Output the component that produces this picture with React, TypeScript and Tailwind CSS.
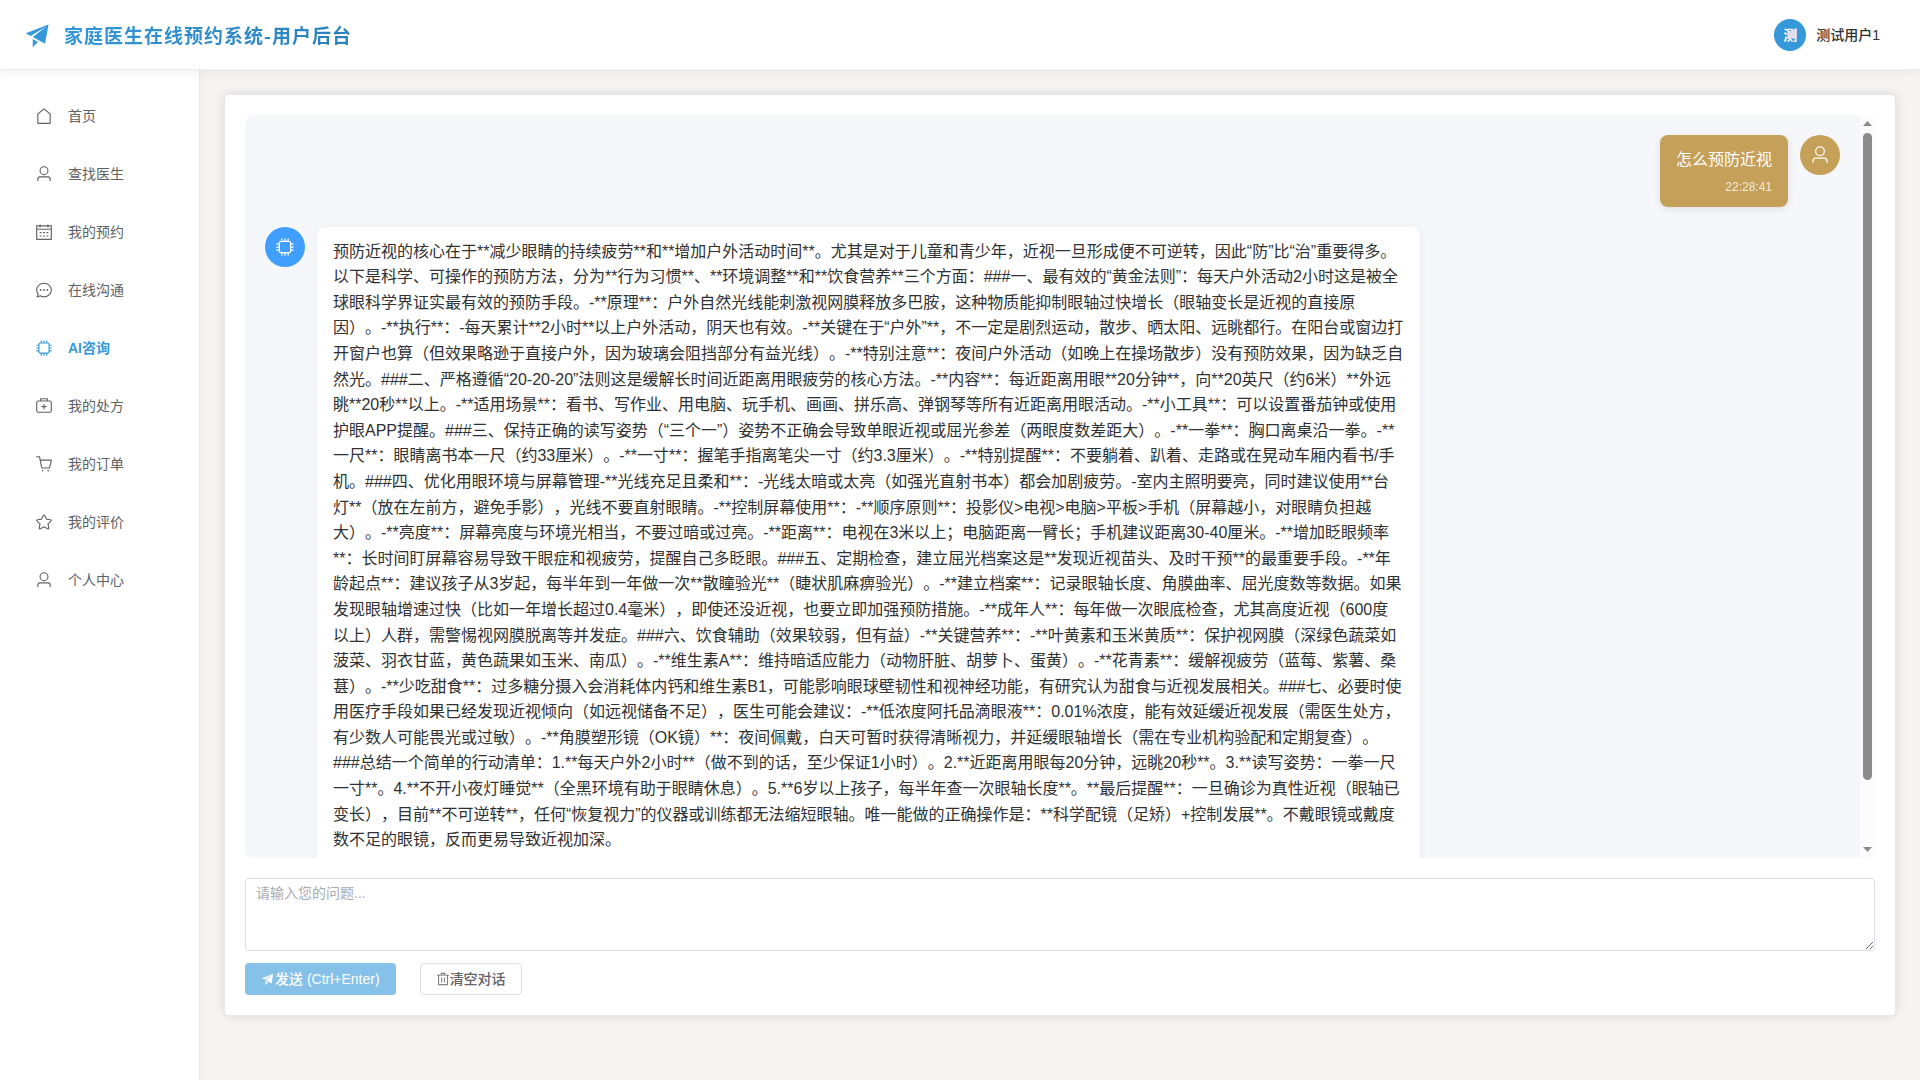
import { useState } from "react"
import clsx from "clsx"

// Icon outlines, all on a 1024 grid
const ICONS = {
  promotion: "m64 448 832-320-128 704-446.08-243.328L832 192 242.816 545.536zm256 512V657.024L512 768z",
  house:
    "M192 413.952V896h640V413.952L512 147.328zM139.52 374.4l352-293.312a32 32 0 0 1 40.96 0l352 293.312A32 32 0 0 1 896 398.976V928a32 32 0 0 1-32 32H160a32 32 0 0 1-32-32V398.976a32 32 0 0 1 11.52-24.576",
  user: "M512 512a192 192 0 1 0 0-384 192 192 0 0 0 0 384m0 64a256 256 0 1 1 0-512 256 256 0 0 1 0 512m320 320v-96a96 96 0 0 0-96-96H288a96 96 0 0 0-96 96v96a32 32 0 1 1-64 0v-96a160 160 0 0 1 160-160h448a160 160 0 0 1 160 160v96a32 32 0 1 1-64 0",
  calendar:
    "M128 384v512h768V192H768v32a32 32 0 1 1-64 0v-32H320v32a32 32 0 0 1-64 0v-32H128v128h768v64zm192-256h384V96a32 32 0 1 1 64 0v32h160a32 32 0 0 1 32 32v768a32 32 0 0 1-32 32H96a32 32 0 0 1-32-32V160a32 32 0 0 1 32-32h160V96a32 32 0 0 1 64 0zm-32 384h64a32 32 0 0 1 0 64h-64a32 32 0 0 1 0-64m0 192h64a32 32 0 1 1 0 64h-64a32 32 0 1 1 0-64m192-192h64a32 32 0 0 1 0 64h-64a32 32 0 0 1 0-64m0 192h64a32 32 0 1 1 0 64h-64a32 32 0 1 1 0-64m192-192h64a32 32 0 1 1 0 64h-64a32 32 0 1 1 0-64m0 192h64a32 32 0 1 1 0 64h-64a32 32 0 1 1 0-64",
  chat: "m174.72 855.68 135.296-45.12 23.68 11.84C388.096 849.536 448.576 864 512 864c211.84 0 384-166.784 384-352S723.84 160 512 160 128 326.784 128 512c0 69.12 24.96 139.264 70.848 199.232l22.08 28.8-46.272 115.584zm-45.248 82.56A32 32 0 0 1 89.6 896l58.368-145.92C94.72 680.32 64 596.864 64 512 64 299.904 256 96 512 96s448 203.904 448 416-192 416-448 416a461.06 461.06 0 0 1-206.912-48.384zM512 563.2a51.2 51.2 0 1 1 0-102.4 51.2 51.2 0 0 1 0 102.4m192 0a51.2 51.2 0 1 1 0-102.4 51.2 51.2 0 0 1 0 102.4m-384 0a51.2 51.2 0 1 1 0-102.4 51.2 51.2 0 0 1 0 102.4",
  cpu: "M320 256a64 64 0 0 0-64 64v384a64 64 0 0 0 64 64h384a64 64 0 0 0 64-64V320a64 64 0 0 0-64-64zm0-64h384a128 128 0 0 1 128 128v384a128 128 0 0 1-128 128H320a128 128 0 0 1-128-128V320a128 128 0 0 1 128-128M512 64a32 32 0 0 1 32 32v128h-64V96a32 32 0 0 1 32-32m160 0a32 32 0 0 1 32 32v128h-64V96a32 32 0 0 1 32-32m-320 0a32 32 0 0 1 32 32v128h-64V96a32 32 0 0 1 32-32m160 896a32 32 0 0 1-32-32V800h64v128a32 32 0 0 1-32 32m160 0a32 32 0 0 1-32-32V800h64v128a32 32 0 0 1-32 32m-320 0a32 32 0 0 1-32-32V800h64v128a32 32 0 0 1-32 32M64 512a32 32 0 0 1 32-32h128v64H96a32 32 0 0 1-32-32m0-160a32 32 0 0 1 32-32h128v64H96a32 32 0 0 1-32-32m0 320a32 32 0 0 1 32-32h128v64H96a32 32 0 0 1-32-32m896-160a32 32 0 0 1-32 32H800v-64h128a32 32 0 0 1 32 32m0-160a32 32 0 0 1-32 32H800v-64h128a32 32 0 0 1 32 32m0 320a32 32 0 0 1-32 32H800v-64h128a32 32 0 0 1 32 32",
  kit: "M192 256a64 64 0 0 0-64 64v448a64 64 0 0 0 64 64h640a64 64 0 0 0 64-64V320a64 64 0 0 0-64-64zm0-64h640a128 128 0 0 1 128 128v448a128 128 0 0 1-128 128H192A128 128 0 0 1 64 768V320a128 128 0 0 1 128-128M544 512h96a32 32 0 0 1 0 64h-96v96a32 32 0 0 1-64 0v-96h-96a32 32 0 0 1 0-64h96v-96a32 32 0 0 1 64 0zM352 128v64h320v-64zm-32-64h384a32 32 0 0 1 32 32v128a32 32 0 0 1-32 32H320a32 32 0 0 1-32-32V96a32 32 0 0 1 32-32",
  cart: "M432 928a48 48 0 1 1 0-96 48 48 0 0 1 0 96m320 0a48 48 0 1 1 0-96 48 48 0 0 1 0 96M96 128a32 32 0 0 1 0-64h160a32 32 0 0 1 31.36 25.728L320.64 256H928a32 32 0 0 1 31.296 38.72l-96 448A32 32 0 0 1 832 768H384a32 32 0 0 1-31.36-25.728L229.76 128zm314.24 576h395.904l82.304-384H333.44z",
  star: "m512 747.84 228.16 119.936a6.4 6.4 0 0 0 9.28-6.72l-43.52-254.08 184.512-179.904a6.4 6.4 0 0 0-3.52-10.88l-255.104-37.12L517.76 147.904a6.4 6.4 0 0 0-11.52 0L392.192 379.072l-255.104 37.12a6.4 6.4 0 0 0-3.52 10.88L318.08 606.976l-43.584 254.08a6.4 6.4 0 0 0 9.28 6.72zM313.6 924.48a70.4 70.4 0 0 1-102.144-74.24l37.888-220.928L88.96 472.96A70.4 70.4 0 0 1 128 352.896l221.76-32.256 99.2-200.96a70.4 70.4 0 0 1 126.208 0l99.2 200.96 221.824 32.256a70.4 70.4 0 0 1 39.04 120.064L774.72 629.376l37.888 220.928a70.4 70.4 0 0 1-102.144 74.24L512 820.096l-198.4 104.32z",
  trash:
    "M160 256H96a32 32 0 0 1 0-64h256V95.936a32 32 0 0 1 32-32h256a32 32 0 0 1 32 32V192h256a32 32 0 1 1 0 64h-64v672a32 32 0 0 1-32 32H192a32 32 0 0 1-32-32zm448-64v-64H416v64zM224 896h576V256H224zm192-128a32 32 0 0 1-32-32V416a32 32 0 0 1 64 0v320a32 32 0 0 1-32 32m192 0a32 32 0 0 1-32-32V416a32 32 0 0 1 64 0v320a32 32 0 0 1-32 32",
}

type IconName = keyof typeof ICONS

function Icon({ name, className }: { name: IconName; className?: string }) {
  return (
    <svg viewBox="0 0 1024 1024" fill="currentColor" aria-hidden="true" className={clsx("shrink-0", className)}>
      <path d={ICONS[name]} />
    </svg>
  )
}

const menu: { label: string; icon: IconName; active?: boolean }[] = [
  { label: "首页", icon: "house" },
  { label: "查找医生", icon: "user" },
  { label: "我的预约", icon: "calendar" },
  { label: "在线沟通", icon: "chat" },
  { label: "AI咨询", icon: "cpu", active: true },
  { label: "我的处方", icon: "kit" },
  { label: "我的订单", icon: "cart" },
  { label: "我的评价", icon: "star" },
  { label: "个人中心", icon: "user" },
]

const answer = [
  "预防近视的核心在于**减少眼睛的持续疲劳**和**增加户外活动时间**。尤其是对于儿童和青少年，近视一旦形成便不可逆转，因此“防”比“治”重要得多。以下是科学、可操作的预防方法，分为**行为习惯**、**环境调整**和**饮食营养**三个方面：",
  "###一、最有效的“黄金法则”：每天户外活动2小时这是被全球眼科学界证实最有效的预防手段。-**原理**：户外自然光线能刺激视网膜释放多巴胺，这种物质能抑制眼轴过快增长（眼轴变长是近视的直接原因）。-**执行**：-每天累计**2小时**以上户外活动，阴天也有效。-**关键在于“户外”**，不一定是剧烈运动，散步、晒太阳、远眺都行。在阳台或窗边打开窗户也算（但效果略逊于直接户外，因为玻璃会阻挡部分有益光线）。-**特别注意**：夜间户外活动（如晚上在操场散步）没有预防效果，因为缺乏自然光。",
  "###二、严格遵循“20-20-20”法则这是缓解长时间近距离用眼疲劳的核心方法。-**内容**：每近距离用眼**20分钟**，向**20英尺（约6米）**外远眺**20秒**以上。-**适用场景**：看书、写作业、用电脑、玩手机、画画、拼乐高、弹钢琴等所有近距离用眼活动。-**小工具**：可以设置番茄钟或使用护眼APP提醒。",
  "###三、保持正确的读写姿势（“三个一”）姿势不正确会导致单眼近视或屈光参差（两眼度数差距大）。-**一拳**：胸口离桌沿一拳。-**一尺**：眼睛离书本一尺（约33厘米）。-**一寸**：握笔手指离笔尖一寸（约3.3厘米）。-**特别提醒**：不要躺着、趴着、走路或在晃动车厢内看书/手机。",
  "###四、优化用眼环境与屏幕管理-**光线充足且柔和**：-光线太暗或太亮（如强光直射书本）都会加剧疲劳。-室内主照明要亮，同时建议使用**台灯**（放在左前方，避免手影），光线不要直射眼睛。-**控制屏幕使用**：-**顺序原则**：投影仪>电视>电脑>平板>手机（屏幕越小，对眼睛负担越大）。-**亮度**：屏幕亮度与环境光相当，不要过暗或过亮。-**距离**：电视在3米以上；电脑距离一臂长；手机建议距离30-40厘米。-**增加眨眼频率**：长时间盯屏幕容易导致干眼症和视疲劳，提醒自己多眨眼。",
  "###五、定期检查，建立屈光档案这是**发现近视苗头、及时干预**的最重要手段。-**年龄起点**：建议孩子从3岁起，每半年到一年做一次**散瞳验光**（睫状肌麻痹验光）。-**建立档案**：记录眼轴长度、角膜曲率、屈光度数等数据。如果发现眼轴增速过快（比如一年增长超过0.4毫米），即使还没近视，也要立即加强预防措施。-**成年人**：每年做一次眼底检查，尤其高度近视（600度以上）人群，需警惕视网膜脱离等并发症。",
  "###六、饮食辅助（效果较弱，但有益）-**关键营养**：-**叶黄素和玉米黄质**：保护视网膜（深绿色蔬菜如菠菜、羽衣甘蓝，黄色蔬果如玉米、南瓜）。-**维生素A**：维持暗适应能力（动物肝脏、胡萝卜、蛋黄）。-**花青素**：缓解视疲劳（蓝莓、紫薯、桑葚）。-**少吃甜食**：过多糖分摄入会消耗体内钙和维生素B1，可能影响眼球壁韧性和视神经功能，有研究认为甜食与近视发展相关。",
  "###七、必要时使用医疗手段如果已经发现近视倾向（如远视储备不足），医生可能会建议：-**低浓度阿托品滴眼液**：0.01%浓度，能有效延缓近视发展（需医生处方，有少数人可能畏光或过敏）。-**角膜塑形镜（OK镜）**：夜间佩戴，白天可暂时获得清晰视力，并延缓眼轴增长（需在专业机构验配和定期复查）。",
  "###总结一个简单的行动清单：1.**每天户外2小时**（做不到的话，至少保证1小时）。2.**近距离用眼每20分钟，远眺20秒**。3.**读写姿势：一拳一尺一寸**。4.**不开小夜灯睡觉**（全黑环境有助于眼睛休息）。5.**6岁以上孩子，每半年查一次眼轴长度**。**最后提醒**：一旦确诊为真性近视（眼轴已变长），目前**不可逆转**，任何“恢复视力”的仪器或训练都无法缩短眼轴。唯一能做的正确操作是：**科学配镜（足矫）+控制发展**。不戴眼镜或戴度数不足的眼镜，反而更易导致近视加深。",
].join("")

function Header() {
  return (
    <header className="relative z-20 flex h-[70px] items-center justify-between border-b border-[#ebeeed] bg-white pr-10 pl-6 shadow-[0_2px_12px_rgba(0,0,0,0.06)]">
      <div className="flex items-center gap-3">
        <Icon name="promotion" className="size-7 text-[#3498db]" />
        <h1 className="bg-linear-135 from-[#3498db] to-[#2980b9] bg-clip-text font-['Noto_Sans_CJK_SC',sans-serif] text-[19px] leading-7 font-bold tracking-[1px] text-transparent">
          家庭医生在线预约系统-用户后台
        </h1>
      </div>
      <button type="button" className="flex items-center gap-2.5 text-sm font-medium text-[#303133]">
        <span className="flex size-8 items-center justify-center rounded-full bg-[#3498db] font-bold text-white">测</span>
        测试用户1
      </button>
    </header>
  )
}

function Sidebar() {
  return (
    <nav className="z-10 w-[200px] shrink-0 border-r border-[#ebeae8] bg-white pt-[21px] shadow-[2px_0_12px_rgba(0,0,0,0.04)]">
      <ul className="flex flex-col gap-2">
        {menu.map((item) => (
          <li key={item.label}>
            <a
              href="#"
              aria-current={item.active ? "page" : undefined}
              className={clsx(
                "flex h-[50px] items-center gap-[15px] pl-[35px] text-sm",
                item.active ? "font-bold text-[#3498db]" : "text-[#606266]",
              )}
            >
              <Icon name={item.icon} className="size-[18px]" />
              {item.label}
            </a>
          </li>
        ))}
      </ul>
    </nav>
  )
}

function ScrollTrack() {
  return (
    <div className="flex w-[15px] shrink-0 flex-col items-center bg-[#fcfcfc] py-1.5 text-[#8b8b8b]" aria-hidden="true">
      <svg viewBox="0 0 9 5" className="h-[5px] w-[9px] shrink-0" fill="currentColor">
        <path d="M4.5 0 9 5H0z" />
      </svg>
      <div className="mt-[7px] h-[647px] max-h-[89%] w-[9px] rounded-full bg-[#8b8b8b]" />
      <svg viewBox="0 0 9 5" className="mt-auto h-[5px] w-[9px] shrink-0" fill="currentColor">
        <path d="M0 0h9L4.5 5z" />
      </svg>
    </div>
  )
}

function Avatar({ icon, className }: { icon: IconName; className: string }) {
  return (
    <div className={clsx("flex size-10 shrink-0 items-center justify-center rounded-full text-white", className)}>
      <Icon name={icon} className="size-5" />
    </div>
  )
}

export default function App() {
  const [question, setQuestion] = useState("")

  return (
    <div
      className="flex min-h-screen flex-col bg-[#f8f4f1] font-['Liberation_Sans','Noto_Sans_CJK_SC',sans-serif] [text-spacing-trim:space-all]"
      lang="zh-CN"
    >
      <Header />
      <div className="flex grow">
        <Sidebar />
        <main className="min-w-0 grow p-6">
          <section className="rounded border border-[#e4e7ed] bg-white p-5 shadow-[0_0_12px_rgba(0,0,0,0.12)]">
            <div className="flex h-[calc(100vh-337px)] overflow-hidden rounded-lg bg-[#f5f7fb]">
              <div className="flex min-w-0 grow flex-col gap-5 overflow-y-auto p-5 [scrollbar-width:none]">
                <div className="flex flex-row-reverse items-start gap-3">
                  <Avatar icon="user" className="bg-[#c5a059]" />
                  <div className="max-w-[70%] rounded-lg bg-[#c5a059] px-4 py-3 text-white shadow-[0_2px_8px_rgba(0,0,0,0.1)]">
                    <p className="leading-[1.6]">怎么预防近视</p>
                    <time className="mt-1.5 block text-right text-xs leading-4 opacity-80">22:28:41</time>
                  </div>
                </div>
                <div className="flex items-start gap-3">
                  <Avatar icon="cpu" className="bg-[#409eff]" />
                  <div className="max-w-[70%] rounded-lg bg-white px-4 pt-3 pb-9 text-[#303133] shadow-[0_2px_8px_rgba(0,0,0,0.06)]">
                    <p className="leading-[1.6] break-words">{answer}</p>
                  </div>
                </div>
              </div>
              <ScrollTrack />
            </div>

            <form className="mt-5" onSubmit={(e) => e.preventDefault()}>
              <textarea
                rows={3}
                aria-label="请输入您的问题"
                placeholder="请输入您的问题..."
                value={question}
                onChange={(e) => setQuestion(e.target.value)}
                className="block w-full resize-y rounded border border-[#dcdfe6] px-2.5 py-1 text-sm leading-[21px] text-[#606266] outline-none placeholder:text-[#a8abb2]"
              />
              <div className="mt-3 flex gap-6">
                <button
                  type="submit"
                  disabled={!question}
                  className="flex h-8 items-center rounded bg-[#3498db] px-4 text-sm font-medium text-white disabled:bg-[#85c1e9]"
                >
                  <Icon name="promotion" className="size-3.5" />
                  发送 (Ctrl+Enter)
                </button>
                <button
                  type="button"
                  onClick={() => setQuestion("")}
                  className="flex h-8 items-center rounded border border-[#dcdfe6] bg-white px-[15px] text-sm font-medium text-[#606266]"
                >
                  <Icon name="trash" className="size-3.5" />
                  清空对话
                </button>
              </div>
            </form>
          </section>
        </main>
      </div>
    </div>
  )
}
